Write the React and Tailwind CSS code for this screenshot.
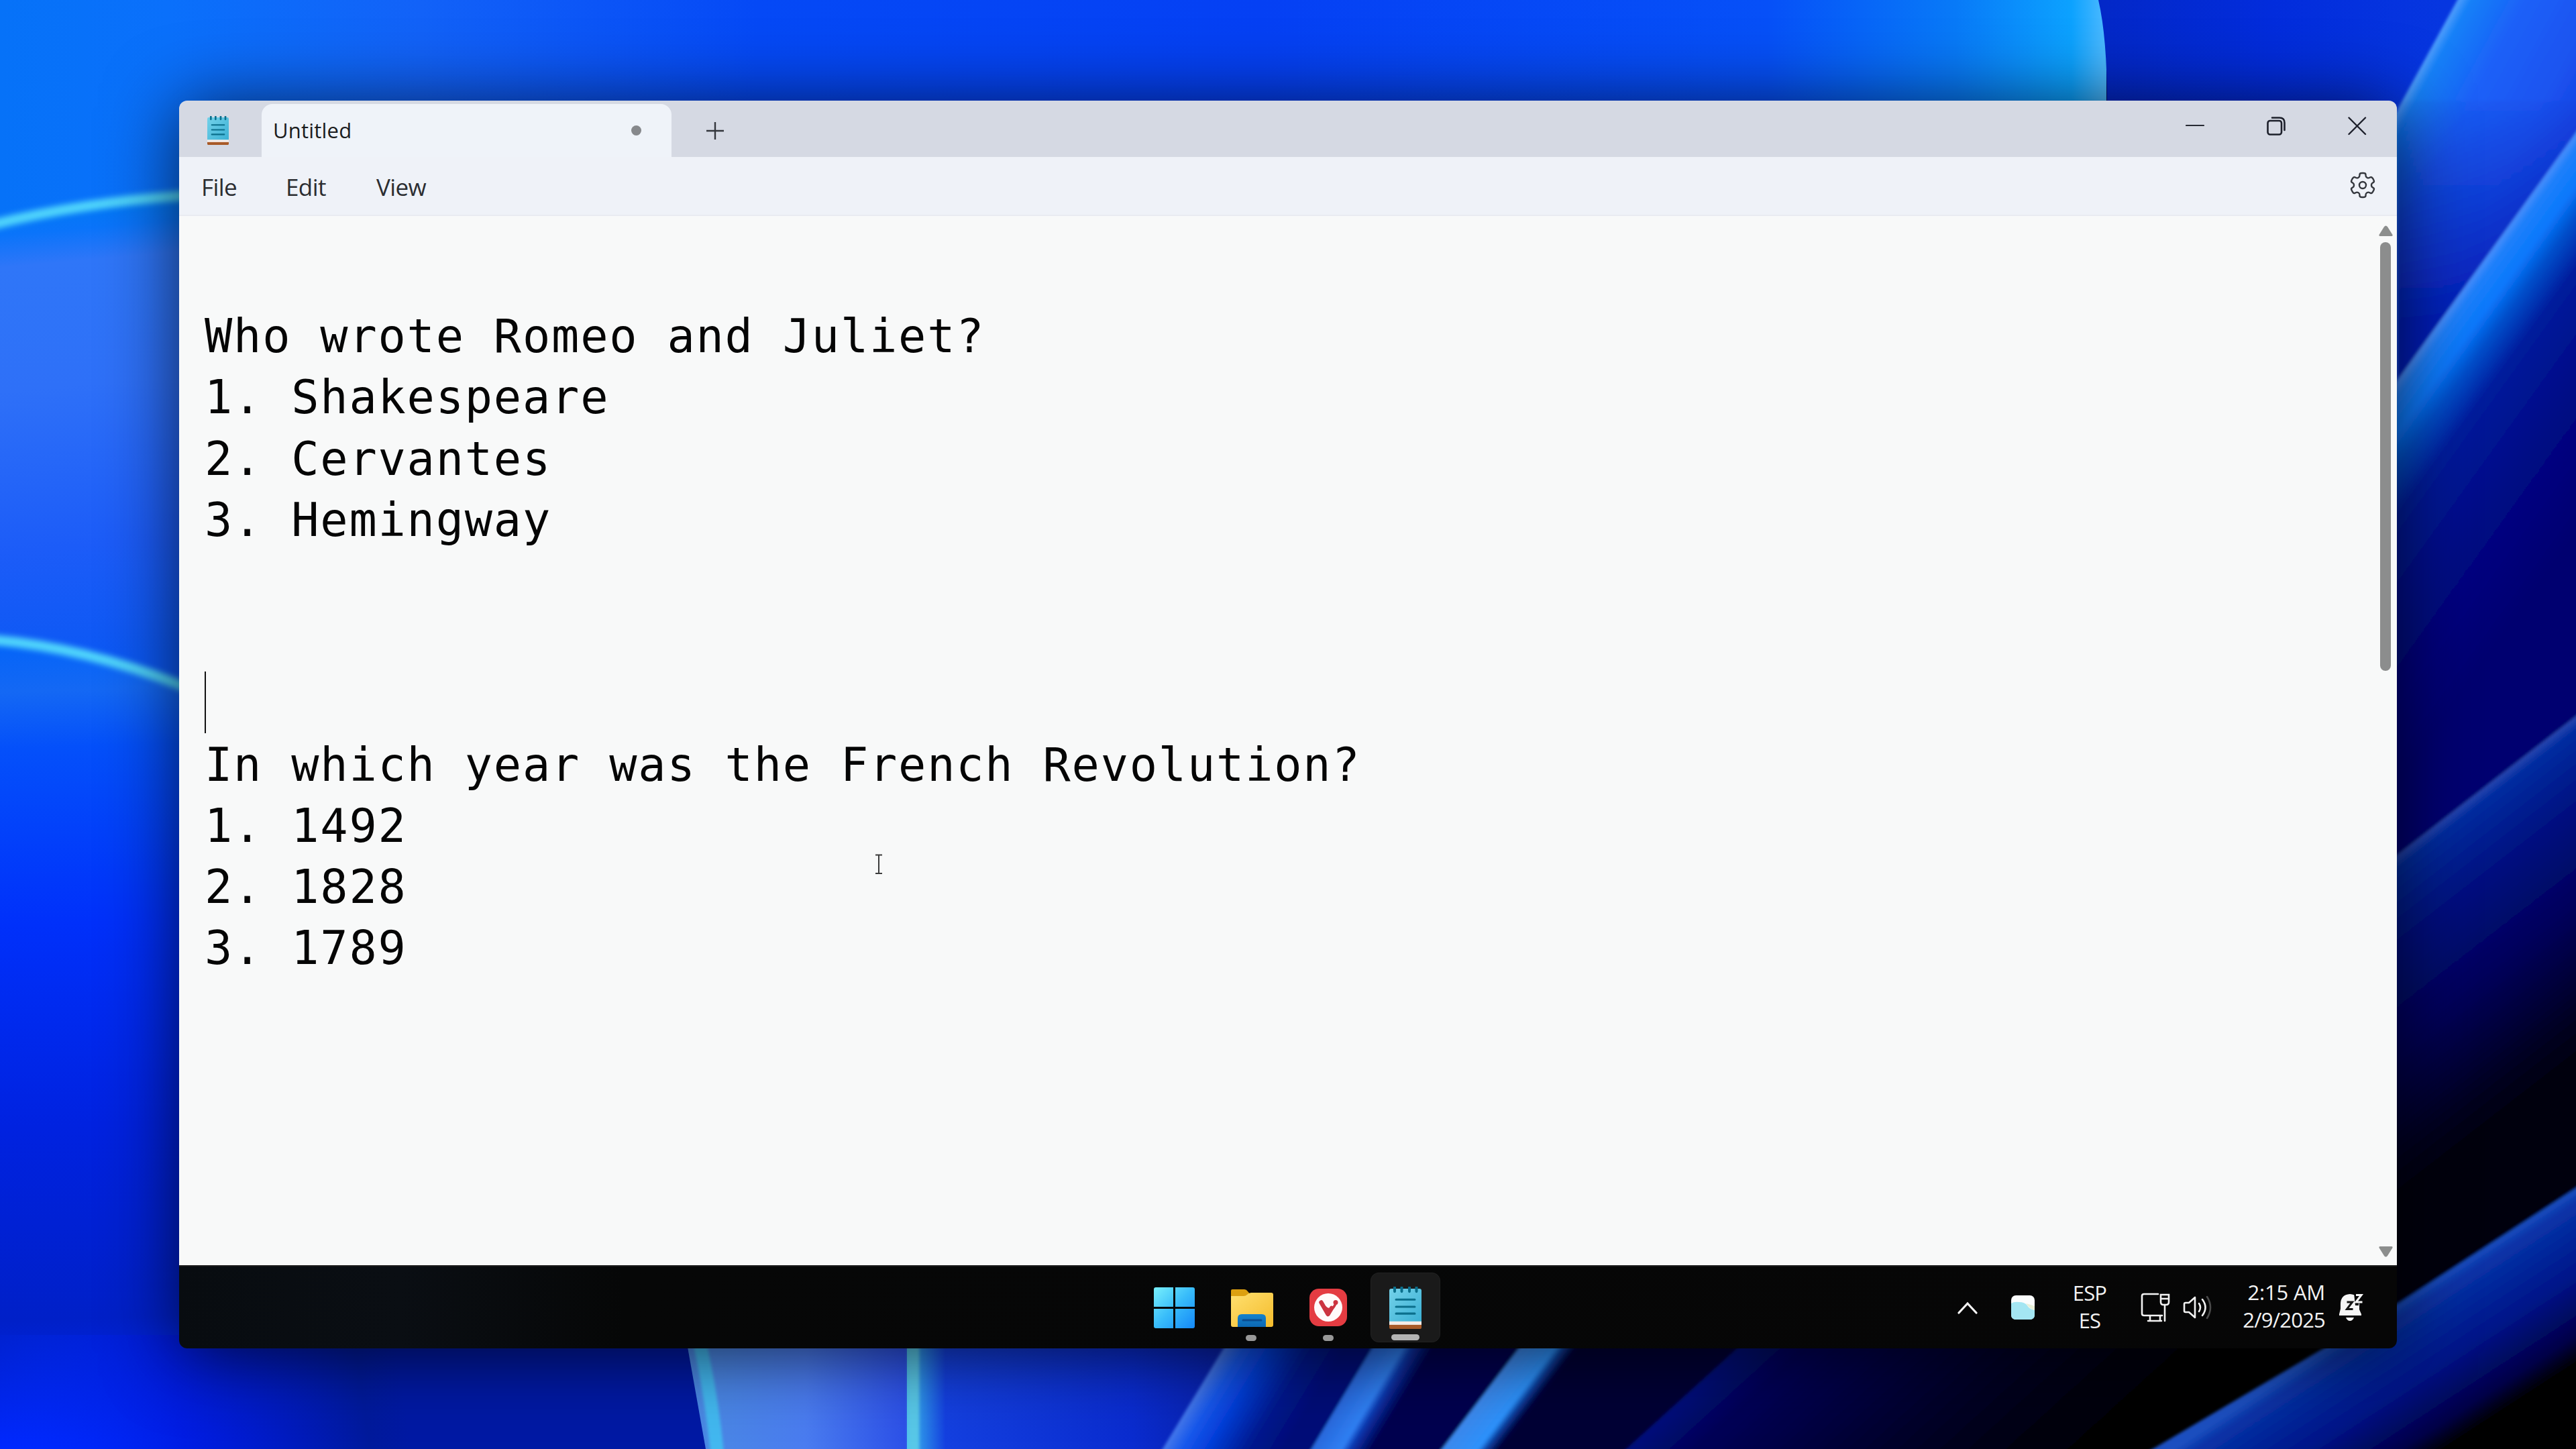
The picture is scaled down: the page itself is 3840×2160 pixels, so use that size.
const Wallpaper = () => (
  <svg className="absolute inset-0 h-full w-full" viewBox="0 0 3840 2160" preserveAspectRatio="none">
    <defs>
      <linearGradient id="top" gradientUnits="userSpaceOnUse" x1="0" y1="0" x2="3135" y2="0">
        <stop offset="0" stopColor="#0672f8" />
        <stop offset="0.08" stopColor="#0a70fb" />
        <stop offset="0.2" stopColor="#1262f8" />
        <stop offset="0.36" stopColor="#0549f6" />
        <stop offset="0.6" stopColor="#0540f4" />
        <stop offset="0.84" stopColor="#0650f8" />
        <stop offset="0.93" stopColor="#087af8" />
        <stop offset="0.985" stopColor="#0ca2ff" />
        <stop offset="1" stopColor="#48b8ff" />
      </linearGradient>
      <linearGradient id="leftA" gradientUnits="userSpaceOnUse" x1="0" y1="310" x2="60" y2="990">
        <stop offset="0" stopColor="#0078f4" />
        <stop offset="0.06" stopColor="#0a74fa" />
        <stop offset="0.13" stopColor="#2f76f8" />
        <stop offset="0.4" stopColor="#2e70f8" />
        <stop offset="0.75" stopColor="#1c5cf8" />
        <stop offset="1" stopColor="#0c58f4" />
      </linearGradient>
      <linearGradient id="leftB" gradientUnits="userSpaceOnUse" x1="0" y1="960" x2="40" y2="2160">
        <stop offset="0" stopColor="#0464f8" />
        <stop offset="0.06" stopColor="#1468f4" />
        <stop offset="0.13" stopColor="#0450fa" />
        <stop offset="0.35" stopColor="#0030fa" />
        <stop offset="0.6" stopColor="#0022e0" />
        <stop offset="0.84" stopColor="#0020c8" />
        <stop offset="1" stopColor="#0028ff" />
      </linearGradient>
      <linearGradient id="bottom" gradientUnits="userSpaceOnUse" x1="0" y1="2160" x2="600" y2="2070">
        <stop offset="0" stopColor="#0030ff" stopOpacity="0" />
        <stop offset="0.45" stopColor="#0018d8" stopOpacity="0.7" />
        <stop offset="0.9" stopColor="#001a9c" />
        <stop offset="1" stopColor="#0019a4" />
      </linearGradient>
      <linearGradient id="strip1" gradientUnits="userSpaceOnUse" x1="1050" y1="0" x2="1352" y2="0">
        <stop offset="0" stopColor="#4a88e4" />
        <stop offset="0.5" stopColor="#4a7cf0" />
        <stop offset="1" stopColor="#2c50e8" />
      </linearGradient>
      <linearGradient id="strip2" gradientUnits="userSpaceOnUse" x1="1352" y1="0" x2="1830" y2="0">
        <stop offset="0" stopColor="#4fc4f0" />
        <stop offset="0.05" stopColor="#2a88e8" />
        <stop offset="0.12" stopColor="#1440e0" />
        <stop offset="0.7" stopColor="#0a2cd0" />
        <stop offset="1" stopColor="#0820a8" />
      </linearGradient>
      <linearGradient id="strip3" gradientUnits="userSpaceOnUse" x1="1779" y1="2085" x2="1911" y2="2165">
        <stop offset="0" stopColor="#4478ec" />
        <stop offset="0.16" stopColor="#1858ec" />
        <stop offset="0.35" stopColor="#0640dc" />
        <stop offset="0.7" stopColor="#001a90" />
        <stop offset="1" stopColor="#000c78" />
      </linearGradient>
      <linearGradient id="strip4" gradientUnits="userSpaceOnUse" x1="2000" y1="2085" x2="2066" y2="2125">
        <stop offset="0" stopColor="#2868dc" />
        <stop offset="0.5" stopColor="#3080f4" />
        <stop offset="0.65" stopColor="#0c38b0" />
        <stop offset="1" stopColor="#000050" />
      </linearGradient>
      <linearGradient id="strip5" gradientUnits="userSpaceOnUse" x1="2207" y1="2085" x2="2270" y2="2133">
        <stop offset="0" stopColor="#3c88ec" />
        <stop offset="0.54" stopColor="#2c92fc" />
        <stop offset="0.66" stopColor="#0c40a0" />
        <stop offset="0.85" stopColor="#000038" />
        <stop offset="1" stopColor="#000034" />
      </linearGradient>
      <linearGradient id="strip6" gradientUnits="userSpaceOnUse" x1="2508" y1="2085" x2="2825" y2="2434">
        <stop offset="0" stopColor="#00127c" />
        <stop offset="0.14" stopColor="#000058" />
        <stop offset="0.5" stopColor="#000030" />
        <stop offset="0.9" stopColor="#000008" />
        <stop offset="1" stopColor="#000004" />
      </linearGradient>
      <linearGradient id="gap" gradientUnits="userSpaceOnUse" x1="3135" y1="0" x2="3640" y2="0">
        <stop offset="0" stopColor="#0328c8" />
        <stop offset="0.5" stopColor="#022cdc" />
        <stop offset="1" stopColor="#0636e0" />
      </linearGradient>
      <linearGradient id="r1" gradientUnits="userSpaceOnUse" x1="3618" y1="82" x2="3846" y2="207">
        <stop offset="0" stopColor="#54a0fc" />
        <stop offset="0.07" stopColor="#1480f8" />
        <stop offset="0.35" stopColor="#1c60f8" />
        <stop offset="0.7" stopColor="#1c54f0" />
        <stop offset="1" stopColor="#1440e0" />
      </linearGradient>
      <linearGradient id="r1b" gradientUnits="userSpaceOnUse" x1="0" y1="130" x2="0" y2="480">
        <stop offset="0" stopColor="#0020b0" stopOpacity="0" />
        <stop offset="1" stopColor="#0018b0" stopOpacity="0.9" />
      </linearGradient>
      <linearGradient id="r2" gradientUnits="userSpaceOnUse" x1="3706" y1="383" x2="3990" y2="588">
        <stop offset="0" stopColor="#4c90fc" />
        <stop offset="0.04" stopColor="#2080fa" />
        <stop offset="0.13" stopColor="#0878fc" />
        <stop offset="0.21" stopColor="#0450cc" />
        <stop offset="0.34" stopColor="#001c9c" />
        <stop offset="0.65" stopColor="#000884" />
        <stop offset="1" stopColor="#000070" />
      </linearGradient>
      <linearGradient id="r3" gradientUnits="userSpaceOnUse" x1="3706" y1="1171" x2="3963" y2="1503">
        <stop offset="0" stopColor="#2c48b0" />
        <stop offset="0.04" stopColor="#002ca0" />
        <stop offset="0.25" stopColor="#001080" />
        <stop offset="0.55" stopColor="#000058" />
        <stop offset="0.85" stopColor="#000020" />
        <stop offset="1" stopColor="#000008" />
      </linearGradient>
      <linearGradient id="r4" gradientUnits="userSpaceOnUse" x1="3706" y1="1858" x2="3824" y2="2040">
        <stop offset="0" stopColor="#1c50c0" />
        <stop offset="0.08" stopColor="#0834a8" />
        <stop offset="0.5" stopColor="#001488" />
        <stop offset="0.85" stopColor="#000048" />
        <stop offset="1" stopColor="#000006" />
      </linearGradient>
      <filter id="soft" x="-10%" y="-50%" width="120%" height="200%">
        <feGaussianBlur stdDeviation="4" />
      </filter>
      <filter id="edge" x="-10%" y="-10%" width="120%" height="120%">
        <feGaussianBlur stdDeviation="2" />
      </filter>
    </defs>

    <rect width="3840" height="2160" fill="#000a60" />
    <rect width="3140" height="1000" fill="url(#top)" />
    <path d="M0 335Q130 300 267 290L700 300V1300H0Z" fill="url(#leftA)" />
    <path d="M0 953Q140 965 267 1020L700 1200V2160H0Z" fill="url(#leftB)" />
    <g filter="url(#soft)" fill="none" stroke="#50d4fc" strokeWidth="15">
      <path d="M-20 337Q130 299 300 290" />
      <path d="M-20 953Q140 965 300 1034" />
    </g>

    <path d="M0 1990H1130V2160H0Z" fill="url(#bottom)" />
    <path d="M1020 1980L1052 2160H1360V1980Z" fill="url(#strip1)" />
    <path d="M1352 1980V2160H1900V1980Z" fill="url(#strip2)" />
    <g filter="url(#edge)">
      <path d="M1842 1980L1727 2170H2100V1980Z" fill="url(#strip3)" />
      <path d="M2063 1980L1949 2170H2300V1980Z" fill="url(#strip4)" />
      <path d="M2287 1980L2142 2170H2700V1980Z" fill="url(#strip5)" />
      <path d="M2623 1980L2414 2170H3800V1980Z" fill="url(#strip6)" />
      <path d="M1038 1980Q1060 2070 1070 2175" fill="none" stroke="#42b8f0" strokeWidth="20" />
      <path d="M1362 1980V2175" fill="none" stroke="#58c8e8" strokeWidth="16" />
    </g>

    <path d="M3128 0Q3142 60 3141 170H3700V0Z" fill="url(#gap)" />
    <g filter="url(#edge)">
      <path d="M3666 -5L3560 189V700H3850V-5Z" fill="url(#r1)" />
      <path d="M3574 150H3850V700H3574Z" fill="url(#r1b)" />
      <path d="M3850 184L3560 586V1400H3850Z" fill="url(#r2)" />
      <path d="M3850 1060L3560 1285V2165H3850Z" fill="url(#r3)" />
      <path d="M3850 1765L3560 1953L3192 2170H3850Z" fill="url(#r4)" />
    </g>
  </svg>
);

const NotepadIcon = ({ className }) => (
  <svg className={className} viewBox="0 0 48 62" preserveAspectRatio="none">
    <defs>
      <linearGradient id="page" x1="0" y1="0" x2="1" y2="1">
        <stop offset="0" stopColor="#74d2ea" />
        <stop offset="1" stopColor="#3bb0d4" />
      </linearGradient>
    </defs>
    <path d="M0 54H48V60Q48 62 46 62H2Q0 62 0 60Z" fill="#a85a28" />
    <rect y="50" width="48" height="6" fill="#f4ece8" />
    <path d="M0 6Q0 3 3 3H45Q48 3 48 6V51H0Z" fill="url(#page)" />
    <g stroke="#0b6f8c" strokeWidth="3" strokeLinecap="round">
      <path d="M10 19H38M10 29.500H38M10 39.500H38" />
      <path d="M8 1V7M18.500 1V7M30 1V7M40.500 1V7" strokeWidth="4" />
    </g>
  </svg>
);

const gearPath = () => {
  const points = [];
  for (let k = 0; k < 6; k += 1) {
    [[-20, 13.2], [-14, 18.6], [14, 18.6], [20, 13.2]].forEach(([offset, r]) => {
      const a = ((k * 60 - 90 + offset) * Math.PI) / 180;
      points.push([20 + r * Math.cos(a), 20 + r * Math.sin(a)]);
    });
  }
  const mix = (p, q, t) => `${(p[0] + (q[0] - p[0]) * t).toFixed(2)} ${(p[1] + (q[1] - p[1]) * t).toFixed(2)}`;
  return (
    points
      .map((p, i) => {
        const prev = points[(i + points.length - 1) % points.length];
        const next = points[(i + 1) % points.length];
        return `${i === 0 ? "M" : "L"}${mix(p, prev, 0.4)}Q${p[0].toFixed(2)} ${p[1].toFixed(2)} ${mix(p, next, 0.4)}`;
      })
      .join("") + "Z"
  );
};

const TitleBar = () => (
  <div className="flex h-[84px] shrink-0 bg-[#d5d9e3]">
    <div className="flex w-[123px] items-center pl-[42px]">
      <NotepadIcon className="mt-1 h-[43px] w-[32px]" />
    </div>
    <div className="relative mt-[5px] flex w-[611px] items-center rounded-t-2xl bg-[#eff3f9] pl-[17px] pr-[45px]">
      <span className="text-[31px] font-medium tracking-[0.2px] text-[#1b1c20]">Untitled</span>
      <span className="ml-auto size-[15px] rounded-full bg-[#86888c]" />
    </div>
    <svg className="ml-[51px] mt-[31px] size-[28px]" viewBox="0 0 28 28" stroke="#33363c" strokeWidth="2.400">
      <path d="M14 1V27M1 14H27" />
    </svg>
    <div className="ml-auto mr-[45px] mt-[24px] flex h-[28px] gap-[93px]">
      <svg className="w-[28px]" viewBox="0 0 28 28" fill="none" stroke="#272a33" strokeWidth="2.200" strokeLinecap="round">
        <path d="M1 13H27" />
      </svg>
      <svg className="w-[28px]" viewBox="0 0 28 28" fill="none" stroke="#1d202b" strokeWidth="2.600" strokeLinecap="round">
        <rect x="1.500" y="6" width="20.500" height="20.500" rx="3.500" />
        <path d="M8 1.500H19Q26.500 1.500 26.500 9V20" />
      </svg>
      <svg className="w-[28px]" viewBox="0 0 28 28" fill="none" stroke="#1d202b" strokeWidth="2.400" strokeLinecap="round">
        <path d="M1.500 1.500L26 26M26 1.500L1.500 26" />
      </svg>
    </div>
  </div>
);

const MenuBar = () => (
  <div className="flex h-[88px] shrink-0 items-center border-b-2 border-[#e9ebf1] bg-[#eff2f8] pl-[33px] pr-[31px] text-[35px] text-[#2b2d31]">
    <span className="w-[126px] pt-[4px] tracking-[-0.6px]">File</span>
    <span className="w-[135px] pt-[4px] tracking-[-0.6px]">Edit</span>
    <span className="pt-[4px] tracking-[-0.6px]">View</span>
    <svg className="ml-auto size-[40px] -translate-y-px" viewBox="0 0 40 40" fill="none" stroke="#34373d" strokeWidth="2.400">
      <path d={gearPath()} />
      <circle cx="20" cy="20" r="5" />
    </svg>
  </div>
);

const LINES = [
  "",
  "Who wrote Romeo and Juliet?",
  "1. Shakespeare",
  "2. Cervantes",
  "3. Hemingway",
  "",
  "",
  "|",
  "In which year was the French Revolution?",
  "1. 1492",
  "2. 1828",
  "3. 1789",
];

const Editor = () => (
  <div className="relative flex min-h-0 flex-1 bg-[#f8f9f9]">
    <div className="flex-1 pl-[38px] pt-[43px] font-['DejaVu_Sans_Mono',monospace] text-[68.600px] leading-[91.200px] tracking-[1.790px] text-[#050505]">
      {LINES.map((line, i) => (
        <div key={i} className="h-[91.200px] whitespace-pre">
          {line === "|" ? <div className="h-full w-[2px] -translate-y-0.5 bg-[#111]" /> : line}
        </div>
      ))}
    </div>
    <div className="flex w-[32px] flex-col items-center pb-[12px] pr-[2px] pt-[14px]">
      <svg className="h-[17px] w-[21px]" viewBox="0 0 21 17" fill="#8c8e8d">
        <path d="M8 2Q10.500 -1 13 2L20.500 14Q21 16 19 16H2Q0 16 0.500 14Z" />
      </svg>
      <div className="mt-[8px] h-[639px] w-[16px] rounded-full bg-[#8c8d8d]" />
      <svg className="mt-auto h-[17px] w-[21px]" viewBox="0 0 21 17" fill="#8c8e8d">
        <path d="M8 15Q10.500 18 13 15L20.500 3Q21 1 19 1H2Q0 1 0.500 3Z" />
      </svg>
    </div>
    <svg className="absolute left-[1037px] top-[951px] h-[31px] w-[12px]" viewBox="0 0 12 31" fill="none" stroke="#3c3c3c" strokeWidth="2">
      <path d="M1 1.500H11M6 1.500V29M1 29H11" />
    </svg>
  </div>
);

const WindowsLogo = () => (
  <svg className="size-[61px]" viewBox="0 0 61 61">
    <defs>
      <linearGradient id="win" gradientUnits="userSpaceOnUse" x1="0" y1="0" x2="61" y2="61">
        <stop offset="0" stopColor="#78f0fc" />
        <stop offset="0.5" stopColor="#38bcfa" />
        <stop offset="1" stopColor="#1488f8" />
      </linearGradient>
    </defs>
    <path fill="url(#win)" d="M3 0H29V29H0V3Q0 0 3 0ZM32 0H58Q61 0 61 3V29H32ZM0 32H29V61H3Q0 61 0 58ZM32 32H61V58Q61 61 58 61H32Z" />
  </svg>
);

const FolderIcon = () => (
  <svg className="h-[57px] w-[63px] translate-x-px" viewBox="0 0 63 57">
    <defs>
      <linearGradient id="folder" x1="0" y1="0" x2="1" y2="1">
        <stop offset="0" stopColor="#ffe070" />
        <stop offset="1" stopColor="#f4bc2c" />
      </linearGradient>
      <linearGradient id="drawer" x1="0" y1="0" x2="0" y2="1">
        <stop offset="0" stopColor="#1482cc" />
        <stop offset="1" stopColor="#0c68b4" />
      </linearGradient>
    </defs>
    <path d="M0 3Q0 1 2 1H20Q23 1 25 4L29 9V20H0Z" fill="#dca010" />
    <path d="M0 11H19Q22 11 24 9Q27 6 30 6H60Q63 6 63 9V54Q63 57 60 57H3Q0 57 0 54Z" fill="url(#folder)" />
    <path d="M10 57V44Q10 38 16 38H46Q52 38 52 44V57Z" fill="url(#drawer)" />
    <path d="M18 47H45" stroke="#0a4c90" strokeWidth="3" strokeLinecap="round" />
  </svg>
);

const VivaldiIcon = () => (
  <svg className="size-[56px]" viewBox="0 0 56 56">
    <rect width="56" height="56" rx="14" fill="#e43c42" />
    <circle cx="28" cy="28" r="21" fill="#fffafa" />
    <path d="M17.500 20.500L27.500 38L33 29" fill="none" stroke="#cc3440" strokeWidth="6.500" strokeLinecap="round" strokeLinejoin="round" />
    <path d="M23 27Q27 32.500 33 30.500Q37 27.500 39.500 21" fill="none" stroke="#cc3440" strokeWidth="3.500" />
    <circle cx="39" cy="20.500" r="3.500" fill="#cc3440" />
  </svg>
);

const TaskButton = ({ children, active, running }) => (
  <div className={active ? "relative flex size-[104px] items-center justify-center rounded-xl border border-[#222] bg-[#1a1a1a]" : "relative flex size-[104px] items-center justify-center"}>
    {children}
    {running && (
      <span
        className={
          active
            ? "absolute bottom-[2px] left-1/2 h-[9px] w-[42px] -translate-x-1/2 rounded-full bg-[#b4b4b4]"
            : "absolute bottom-[2px] left-1/2 h-[9px] w-[16px] -translate-x-1/2 rounded-full bg-[#989898]"
        }
      />
    )}
  </div>
);

const Tray = () => (
  <div className="ml-auto flex h-full items-center pr-[49px] text-[31px] leading-[41px] text-[#f2f2f2]">
    <svg className="h-[19px] w-[30px]" viewBox="0 0 30 19" fill="none" stroke="#f4f4f4" strokeWidth="3.200" strokeLinecap="round">
      <path d="M2 17L15 3L28 17" />
    </svg>
    <svg className="ml-[50px] h-[36px] w-[35px]" viewBox="0 0 35 36">
      <rect width="35" height="36" rx="7" fill="#fbfdfd" />
      <path d="M0 12Q4 9 12 10Q20 10 24 15Q26 20 35 22V29Q35 36 28 36H7Q0 36 0 29Z" fill="#a4e6f2" />
      <path d="M22 12Q27 20 35 22V16Q30 14 22 12Z" fill="#e8f0d8" />
    </svg>
    <div className="ml-[55px] w-[54px] -translate-y-px text-center tracking-[-0.8px]">
      <div>ESP</div>
      <div>ES</div>
    </div>
    <svg className="ml-[49px] h-[44px] w-[44px]" viewBox="0 0 44 44" fill="none" stroke="#f2f2f2" strokeWidth="2.600" strokeLinecap="round">
      <path d="M26 2H5Q2 2 2 5V31Q2 34 5 34H32M11 42H31M14 34V42M29 34V42M36 18V42" />
      <path d="M30 3H42V14Q42 18 38 18H34Q30 18 30 14ZM30 9H42" />
    </svg>
    <svg className="ml-[19px] h-[36px] w-[44px]" viewBox="0 0 44 36" fill="none" stroke="#f2f2f2" strokeWidth="2.600" strokeLinecap="round" strokeLinejoin="round">
      <path d="M2 13Q2 11 4 11H9L18 3V33L9 25H4Q2 25 2 23Z" />
      <path d="M24 12Q28 18 24 24M29 6Q38 18 29 30" />
      <path d="M36 2Q46 18 36 34" stroke="#4a4a4a" />
    </svg>
    <div className="ml-[33px] w-[135px] -translate-y-[2px] text-right">
      <div className="tracking-[-0.2px]">2:15 AM</div>
      <div className="tracking-[-0.8px]">2/9/2025</div>
    </div>
    <svg className="ml-[20px] h-[42px] w-[38px]" viewBox="0 0 38 42">
      <path d="M3 23V16Q3 2 17 1Q31 2 31 16V24L34 31V33H1V31Z" fill="#f6f6f6" />
      <path d="M11 36H23Q21 41 17 41Q13 41 11 36Z" fill="#f6f6f6" />
      <path d="M23 0H38V15H30V18H25Z" fill="#070707" />
      <path d="M26 2.500H34L26 13H35.500" fill="none" stroke="#f6f6f6" strokeWidth="3" />
      <path d="M12.500 13H20.500L12.500 23.500H21.500" fill="none" stroke="#151515" strokeWidth="3" />
    </svg>
  </div>
);

const Taskbar = () => (
  <div className="flex h-[124px] shrink-0 items-center border-t-2 border-[#1c1c1c] bg-[linear-gradient(90deg,#080c10_0%,#0a0e13_10%,#060707_20%,#060606_100%)]">
    <div className="ml-[1431px] flex gap-[11px]">
      <TaskButton><WindowsLogo /></TaskButton>
      <TaskButton running><FolderIcon /></TaskButton>
      <TaskButton running><VivaldiIcon /></TaskButton>
      <TaskButton active running><NotepadIcon className="h-[63px] w-[48px]" /></TaskButton>
    </div>
    <Tray />
  </div>
);

export default function App() {
  return (
    <div className="relative flex h-[2160px] w-[3840px] items-center justify-center overflow-hidden font-['Open_Sans','Noto_Sans',sans-serif]">
      <Wallpaper />
      <div className="relative flex h-[1860px] w-[3306px] flex-col overflow-hidden rounded-[12px] shadow-[0_8px_110px_rgba(0,0,0,0.7)]">
        <TitleBar />
        <MenuBar />
        <Editor />
        <Taskbar />
      </div>
    </div>
  );
}
